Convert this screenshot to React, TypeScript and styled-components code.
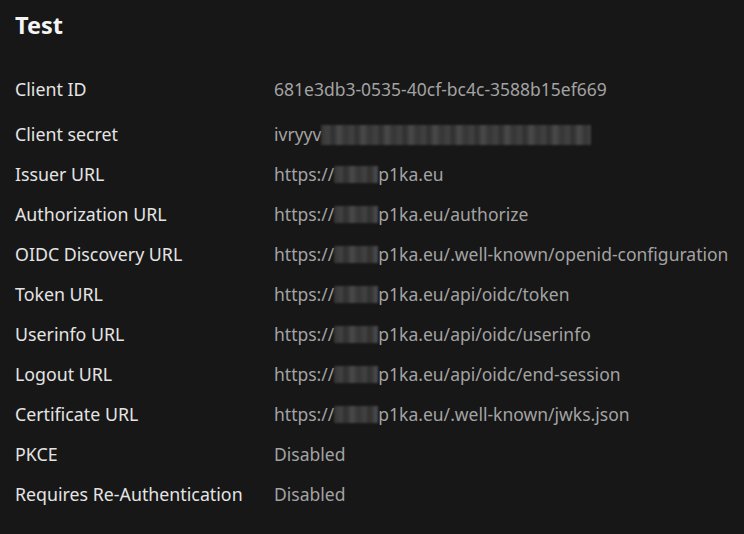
import React from "react";
import styled, { createGlobalStyle } from "styled-components";

const GlobalStyle = createGlobalStyle`
  html, body {
    margin: 0;
    padding: 0;
    background: #171717;
  }
  body {
    font-family: "Noto Sans", "Open Sans", sans-serif;
  }
`;

const Page = styled.div`
  width: 744px;
  height: 534px;
  background: #171717;
  padding: 10px 15px 0 15px;
  box-sizing: border-box;
`;

const Title = styled.h1`
  margin: 0;
  font-size: 23.5px;
  line-height: 30px;
  font-weight: 700;
  color: #f4f4f4;
`;

const InfoGrid = styled.div`
  display: grid;
  grid-template-columns: 259px 1fr;
  margin-top: 37px;
`;

const Label = styled.div<{ $tall?: boolean }>`
  font-size: 17.8px;
  line-height: 24px;
  color: #e4e4e4;
  white-space: nowrap;
  padding-bottom: ${(p) => (p.$tall ? "21px" : "16px")};
`;

const Value = styled.div<{ $tall?: boolean }>`
  font-size: 17.5px;
  line-height: 24px;
  color: #a3a3a3;
  white-space: nowrap;
  padding-bottom: ${(p) => (p.$tall ? "21px" : "16px")};
`;

const Blur = styled.span<{ $w: number; $h: number }>`
  display: inline-block;
  vertical-align: middle;
  width: ${(p) => p.$w}px;
  height: ${(p) => p.$h}px;
  margin-top: -3px;
  background: repeating-linear-gradient(
      90deg,
      #3a3a3a 0px,
      #4a4a4a 7px,
      #333 12px,
      #555 18px,
      #3c3c3c 24px
    ),
    #3f3f3f;
  opacity: 0.85;
  filter: blur(1.2px);
`;

type Row = { label: string; pre?: string; blur?: [number, number]; post?: string; tall?: boolean };

const rows: Row[] = [
  { label: "Client ID", pre: "681e3db3-0535-40cf-bc4c-3588b15ef669", tall: true },
  { label: "Client secret", pre: "ivryyv", blur: [270, 20] },
  { label: "Issuer URL", pre: "https://", blur: [44, 17], post: "p1ka.eu" },
  { label: "Authorization URL", pre: "https://", blur: [44, 17], post: "p1ka.eu/authorize" },
  {
    label: "OIDC Discovery URL",
    pre: "https://",
    blur: [44, 17],
    post: "p1ka.eu/.well-known/openid-configuration",
  },
  { label: "Token URL", pre: "https://", blur: [44, 17], post: "p1ka.eu/api/oidc/token" },
  { label: "Userinfo URL", pre: "https://", blur: [44, 17], post: "p1ka.eu/api/oidc/userinfo" },
  { label: "Logout URL", pre: "https://", blur: [44, 17], post: "p1ka.eu/api/oidc/end-session" },
  {
    label: "Certificate URL",
    pre: "https://",
    blur: [44, 17],
    post: "p1ka.eu/.well-known/jwks.json",
  },
  { label: "PKCE", pre: "Disabled" },
  { label: "Requires Re-Authentication", pre: "Disabled" },
];

const App = () => {
  return (
    <>
      <GlobalStyle />
      <Page>
        <Title>Test</Title>
        <InfoGrid>
          {rows.map((r) => (
            <React.Fragment key={r.label}>
              <Label $tall={r.tall}>{r.label}</Label>
              <Value $tall={r.tall}>
                {r.pre}
                {r.blur && <Blur $w={r.blur[0]} $h={r.blur[1]} />}
                {r.post}
              </Value>
            </React.Fragment>
          ))}
        </InfoGrid>
      </Page>
    </>
  );
};

export default App;
